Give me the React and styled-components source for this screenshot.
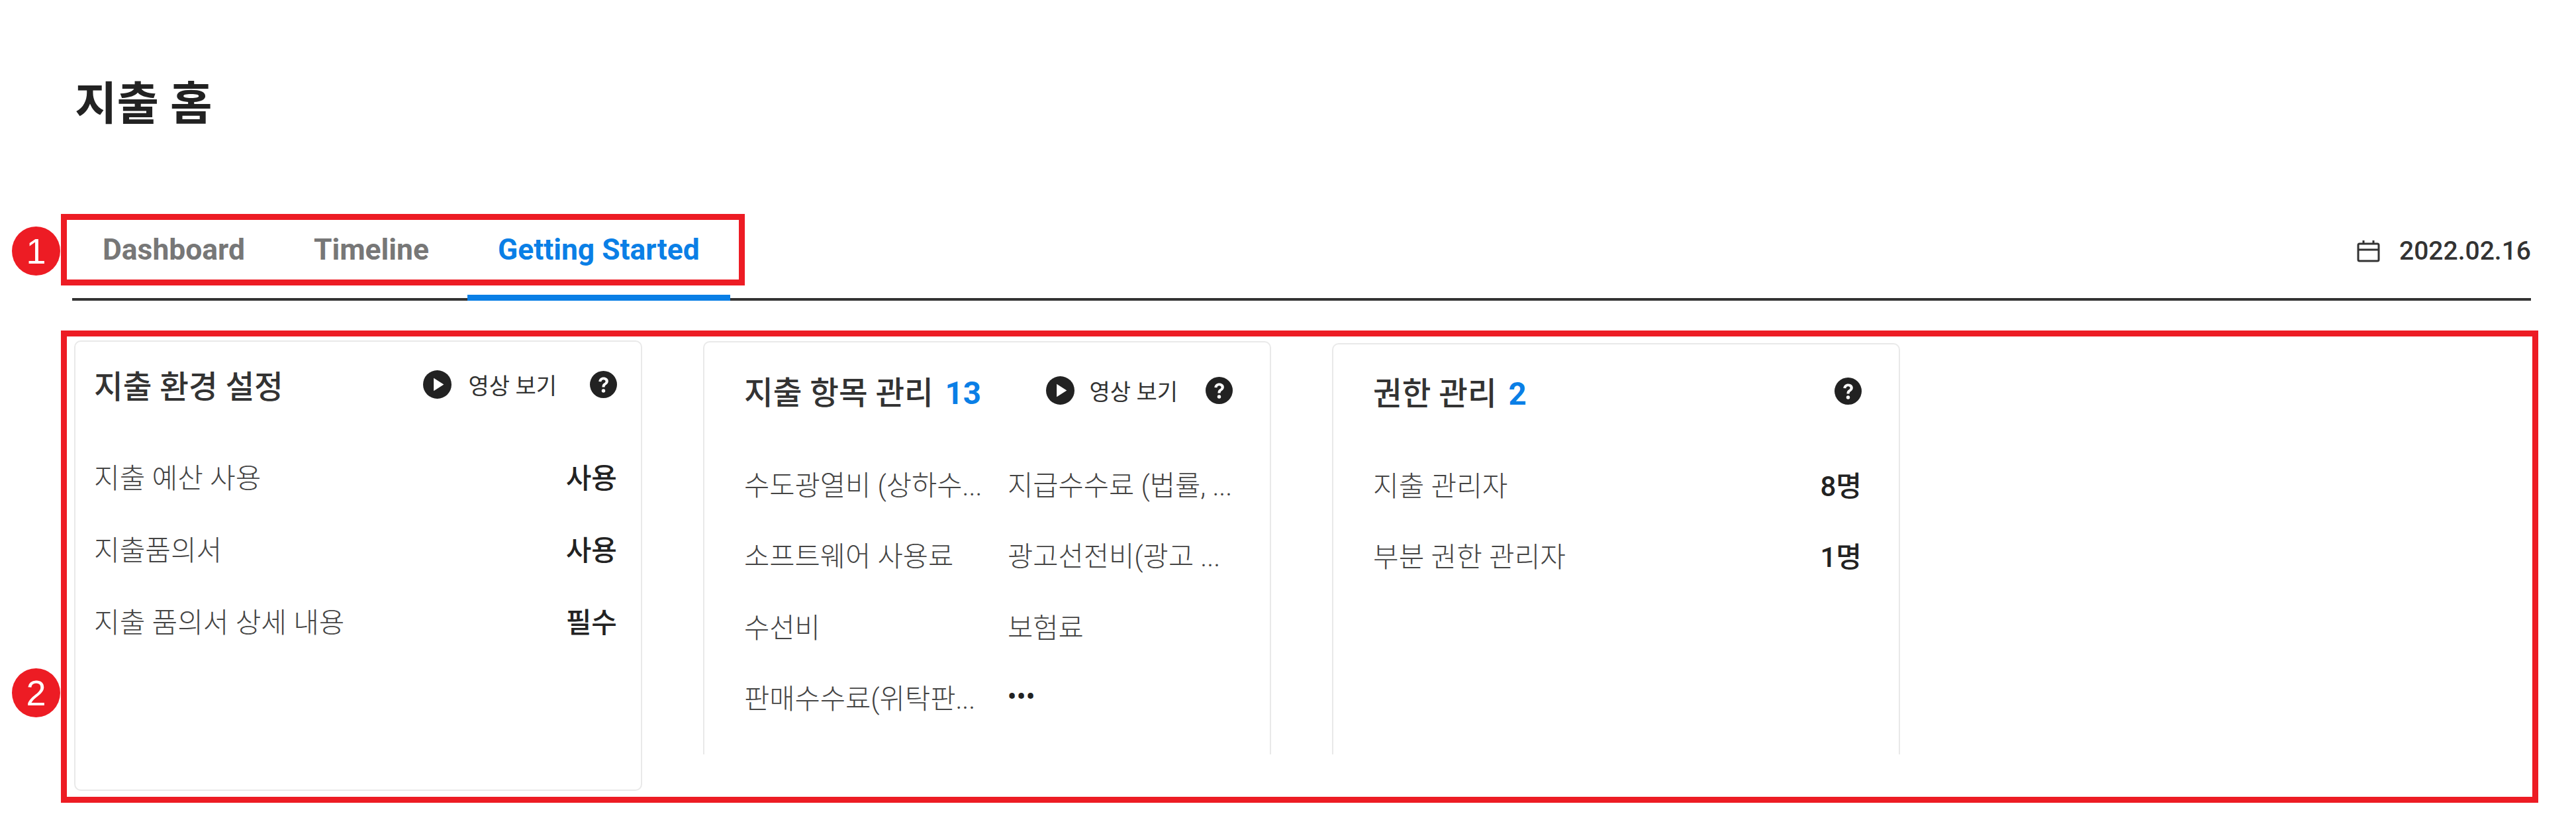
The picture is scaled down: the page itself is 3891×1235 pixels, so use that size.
import React from "react";
import styled, { createGlobalStyle } from "styled-components";

const GlobalStyle = createGlobalStyle`
  html, body {
    margin: 0;
    padding: 0;
    background: #fff;
  }
  * {
    box-sizing: border-box;
  }
`;

const Page = styled.div`
  position: relative;
  height: 1235px;
  overflow: hidden;
  padding: 118px 68px 0 109px;
  font-family: Roboto, "Noto Sans CJK KR", sans-serif;
  color: #222;
`;

const PageTitle = styled.h1`
  margin: 0 0 0 4px;
  height: 80px;
  line-height: 80px;
  font-size: 69px;
  font-weight: 700;
  color: #222;
`;

const TabBar = styled.div`
  display: flex;
  align-items: center;
  justify-content: space-between;
  height: 124px;
  margin-top: 132px;
  border-bottom: 4px solid #333;
`;

const Tabs = styled.div`
  display: flex;
  align-self: stretch;
  gap: 12px;
`;

const Tab = styled.div`
  display: flex;
  align-items: center;
  height: calc(100% + 4px);
  padding: 0 46px 22px;
  font-size: 44.4px;
  font-weight: 700;
  color: ${(p) => (p.$active ? "#0a7fe6" : "#777")};
  border-bottom: 9px solid ${(p) => (p.$active ? "#0a7fe6" : "transparent")};
`;

const DateBox = styled.div`
  display: flex;
  align-items: center;
  gap: 29px;
  padding-bottom: 22px;
  font-size: 39px;
  font-weight: 500;
  color: #333;
`;

const Cards = styled.div`
  display: flex;
  align-items: flex-start;
  gap: 92px;
  padding-left: 3px;
`;

const Card = styled.section`
  width: 858px;
  height: ${(p) => p.$height}px;
  margin-top: ${(p) => p.$top}px;
  padding: ${(p) => p.$padTop}px ${(p) => p.$padRight}px 0 ${(p) => p.$padLeft}px;
  border: 2px solid #e9e9e9;
  border-bottom: ${(p) => (p.$open ? "none" : "2px solid #e9e9e9")};
  border-radius: ${(p) => (p.$open ? "10px 10px 0 0" : "10px")};
`;

const CardHeader = styled.div`
  display: flex;
  align-items: center;
  height: 64px;
`;

const CardTitle = styled.h2`
  flex: 1;
  margin: 0;
  font-size: 47.5px;
  font-weight: 500;
  color: #333;
`;

const Count = styled.span`
  margin-left: 6px;
  font-weight: 700;
  color: #0a7fe6;
`;

const VideoLink = styled.div`
  display: flex;
  align-items: center;
  gap: ${(p) => p.$gap}px;
  margin-right: ${(p) => p.$after}px;
  font-size: 34px;
  color: #333;
`;

const Rows = styled.div`
  margin-top: ${(p) => p.$gap}px;
`;

const Row = styled.div`
  display: flex;
  align-items: center;
  justify-content: space-between;
  height: ${(p) => p.$height}px;
  font-size: 42px;
`;

const RowLabel = styled.span`
  color: #444;
  font-weight: 300;
`;

const RowValue = styled.span`
  font-weight: 500;
  color: #222;
`;

const ItemGrid = styled.div`
  display: grid;
  grid-template-columns: 356px 333px;
  grid-auto-rows: 107.5px;
  column-gap: 42px;
  align-items: center;
  margin-top: 55px;
  font-size: 41.6px;
  font-weight: 300;
  color: #444;
`;

const Item = styled.div`
  white-space: nowrap;
`;

const MoreDots = styled.div`
  font-size: 36px;
  font-weight: 700;
  letter-spacing: 1px;
  color: #222;
`;

const NoteBox = styled.div`
  position: absolute;
  left: ${(p) => p.$left}px;
  top: ${(p) => p.$y}px;
  width: ${(p) => p.$width}px;
  height: ${(p) => p.$height}px;
  border: 9px solid #ed1c24;
`;

const NoteBadge = styled.div`
  position: absolute;
  left: 18px;
  top: ${(p) => p.$y}px;
  width: 73px;
  height: 74px;
  border-radius: 50%;
  background: #ed1c24;
  color: #fff;
  display: flex;
  align-items: center;
  justify-content: center;
  font-family: "Liberation Sans", sans-serif;
  font-size: 54px;
`;

const PlayIcon = () => (
  <svg width="43" height="43" viewBox="0 0 24 24">
    <circle cx="12" cy="12" r="12" fill="#222" />
    <path d="M9 6.5v11l8.5-5.5z" fill="#fff" />
  </svg>
);

const HelpIcon = () => (
  <svg width="41" height="41" viewBox="0 0 24 24">
    <circle cx="12" cy="12" r="12" fill="#222" />
    <path
      d="M7.8 9.4c.2-2.4 2-3.8 4.3-3.8 2.4 0 4.2 1.4 4.2 3.5 0 1.6-.9 2.4-2 3.2-.8.6-1.1 1-1.1 2h-2.4c0-1.7.6-2.6 1.7-3.4.8-.6 1.3-1 1.3-1.7 0-.8-.7-1.4-1.7-1.4-1.1 0-1.8.7-1.9 1.7z"
      fill="#fff"
    />
    <circle cx="12" cy="17.6" r="1.6" fill="#fff" />
  </svg>
);

const CalendarIcon = () => (
  <svg width="35" height="34" viewBox="0 0 35 34" fill="none" stroke="#333" strokeWidth="3">
    <rect x="2" y="6" width="31" height="26" rx="2" />
    <path d="M2 15h31M10 1v6M25 1v6" />
  </svg>
);

const Video = ({ gap, after }) => (
  <VideoLink $gap={gap} $after={after}>
    <PlayIcon />
    <span>영상 보기</span>
  </VideoLink>
);

const items = [
  "수도광열비 (상하수...",
  "지급수수료 (법률, ...",
  "소프트웨어 사용료",
  "광고선전비(광고 ...",
  "수선비",
  "보험료",
  "판매수수료(위탁판...",
];

const App = () => (
  <Page>
    <GlobalStyle />
    <PageTitle>지출 홈</PageTitle>

    <TabBar>
      <Tabs>
        <Tab>Dashboard</Tab>
        <Tab>Timeline</Tab>
        <Tab $active>Getting Started</Tab>
      </Tabs>
      <DateBox>
        <CalendarIcon />
        2022.02.16
      </DateBox>
    </TabBar>

    <Cards>
      <Card $top={60} $height={680} $padTop={32} $padLeft={28} $padRight={36}>
        <CardHeader>
          <CardTitle>지출 환경 설정</CardTitle>
          <Video gap={25} after={50} />
          <HelpIcon />
        </CardHeader>
        <Rows $gap={52}>
          <Row $height={109}>
            <RowLabel>지출 예산 사용</RowLabel>
            <RowValue>사용</RowValue>
          </Row>
          <Row $height={109}>
            <RowLabel>지출품의서</RowLabel>
            <RowValue>사용</RowValue>
          </Row>
          <Row $height={109}>
            <RowLabel>지출 품의서 상세 내용</RowLabel>
            <RowValue>필수</RowValue>
          </Row>
        </Rows>
      </Card>

      <Card $open $top={61} $height={624} $padTop={40} $padLeft={60} $padRight={56}>
        <CardHeader>
          <CardTitle>
            지출 항목 관리<Count> 13</Count>
          </CardTitle>
          <Video gap={22} after={42} />
          <HelpIcon />
        </CardHeader>
        <ItemGrid>
          {items.map((item) => (
            <Item key={item}>{item}</Item>
          ))}
          <MoreDots>•••</MoreDots>
        </ItemGrid>
      </Card>

      <Card $open $top={64} $height={621} $padTop={38} $padLeft={60} $padRight={56}>
        <CardHeader>
          <CardTitle>
            권한 관리<Count> 2</Count>
          </CardTitle>
          <HelpIcon />
        </CardHeader>
        <Rows $gap={55}>
          <Row $height={107}>
            <RowLabel>지출 관리자</RowLabel>
            <RowValue>8명</RowValue>
          </Row>
          <Row $height={107}>
            <RowLabel>부분 권한 관리자</RowLabel>
            <RowValue>1명</RowValue>
          </Row>
        </Rows>
      </Card>
    </Cards>

    <NoteBox $left={92} $y={323} $width={1033} $height={108} />
    <NoteBadge $y={342}>1</NoteBadge>
    <NoteBox $left={92} $y={499} $width={3742} $height={713} />
    <NoteBadge $y={1009}>2</NoteBadge>
  </Page>
);

export default App;
